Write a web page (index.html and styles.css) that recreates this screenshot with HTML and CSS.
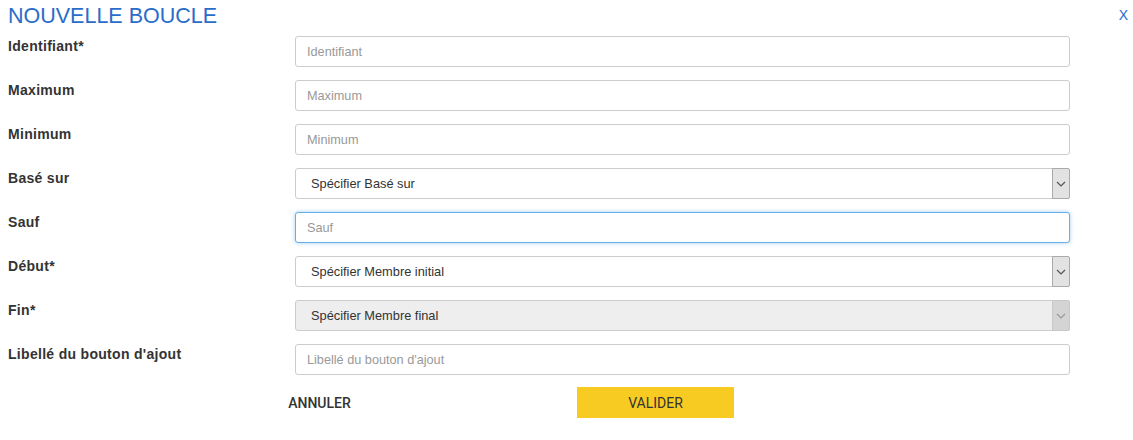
FILE: index.html
```html
<!DOCTYPE html>
<html lang="fr">
<head>
<meta charset="utf-8">
<title>Nouvelle boucle</title>
<link rel="stylesheet" href="styles.css">
</head>
<body>
<div class="dialog">
  <div class="header">
    <h1 class="title">NOUVELLE BOUCLE</h1>
    <span class="close">X</span>
  </div>
  <form class="form">
    <div class="row">
      <label class="label">Identifiant*</label>
      <input class="field" type="text" placeholder="Identifiant">
    </div>
    <div class="row">
      <label class="label">Maximum</label>
      <input class="field" type="text" placeholder="Maximum">
    </div>
    <div class="row">
      <label class="label">Minimum</label>
      <input class="field" type="text" placeholder="Minimum">
    </div>
    <div class="row">
      <label class="label">Basé sur</label>
      <div class="select">
        <span class="select-text">Spécifier Basé sur</span>
        <span class="arrow"><svg width="10" height="6" viewBox="0 0 10 6"><path d="M1 1 L5 5 L9 1" fill="none" stroke="#555" stroke-width="1.2"/></svg></span>
      </div>
    </div>
    <div class="row">
      <label class="label">Sauf</label>
      <input class="field focused" type="text" placeholder="Sauf">
    </div>
    <div class="row">
      <label class="label">Début*</label>
      <div class="select">
        <span class="select-text">Spécifier Membre initial</span>
        <span class="arrow"><svg width="10" height="6" viewBox="0 0 10 6"><path d="M1 1 L5 5 L9 1" fill="none" stroke="#555" stroke-width="1.2"/></svg></span>
      </div>
    </div>
    <div class="row">
      <label class="label">Fin*</label>
      <div class="select disabled">
        <span class="select-text">Spécifier Membre final</span>
        <span class="arrow"><svg width="10" height="6" viewBox="0 0 10 6"><path d="M1 1 L5 5 L9 1" fill="none" stroke="#999" stroke-width="1.2"/></svg></span>
      </div>
    </div>
    <div class="row">
      <label class="label">Libellé du bouton d'ajout</label>
      <input class="field" type="text" placeholder="Libellé du bouton d'ajout">
    </div>
    <div class="actions">
      <button type="button" class="btn btn-cancel">ANNULER</button>
      <button type="button" class="btn btn-ok">VALIDER</button>
    </div>
  </form>
</div>
</body>
</html>
```

FILE: styles.css
```css
* { box-sizing: border-box; }
html, body { margin: 0; padding: 0; background: #fff; }
body { font-family: "Liberation Sans", Arial, sans-serif; color: #333; }

.dialog { width: 1133px; }

.header {
  display: flex;
  justify-content: space-between;
  align-items: flex-start;
  padding: 4px 5px 0 8px;
  height: 36px;
}
.title {
  margin: 0;
  font-size: 21.5px;
  line-height: 24px;
  font-weight: normal;
  color: #2a6dc9;
}
.close {
  font-size: 14px;
  line-height: 18px;
  color: #2a6dc9;
  margin-top: 2px;
}

.form { display: flex; flex-direction: column; gap: 13px; }

.row {
  display: grid;
  grid-template-columns: 295px 775px;
  align-items: start;
}
.label {
  padding: 1px 0 0 8px;
  font-size: 14px;
  letter-spacing: 0.3px;
  line-height: 18px;
  font-weight: bold;
  color: #333;
}
.field {
  height: 31px;
  width: 775px;
  border: 1px solid #ccc;
  border-radius: 3px;
  padding: 0 11px;
  font-family: "Liberation Sans", Arial, sans-serif;
  font-size: 12.7px;
  color: #333;
  background: #fff;
  outline: none;
}
.field::placeholder { color: #999; }
.field.focused {
  border-color: #66afe9;
  box-shadow: 0 0 4px rgba(102, 175, 233, 0.6);
}

.select {
  height: 31px;
  width: 775px;
  border: 1px solid #ccc;
  border-radius: 3px;
  display: flex;
  align-items: stretch;
  background: #fff;
}
.select-text {
  flex: 1;
  padding-left: 15px;
  font-size: 12.8px;
  line-height: 29px;
  color: #333;
}
.arrow {
  width: 18px;
  background: #e2e2e2;
  border: 1px solid #aaa;
  border-radius: 0 2px 2px 0;
  display: flex;
  align-items: center;
  justify-content: center;
  margin: -1px -1px -1px 0;
}
.select.disabled { background: #eee; }
.select.disabled .arrow { background: #d4d4d4; border-color: #c8c8c8; }

.actions {
  display: flex;
  gap: 179px;
  padding-left: 241px;
  margin-top: -1px;
}
.btn {
  width: 157px;
  height: 31px;
  border: none;
  font-family: Roboto, "Liberation Sans", sans-serif;
  font-size: 14px;
  color: #333;
  cursor: pointer;
}
.btn-cancel { background: transparent; font-weight: 500; }
.btn-ok { background: #f8cb22; font-weight: normal; }
```
